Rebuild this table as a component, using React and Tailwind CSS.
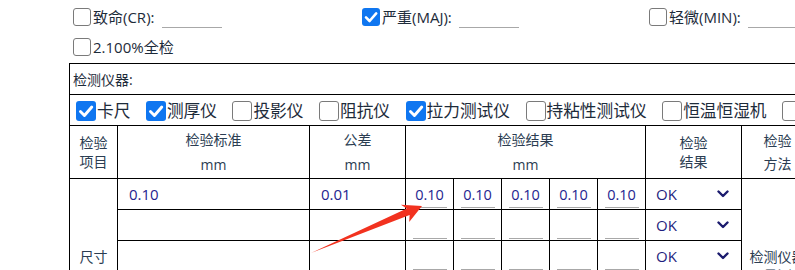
import React from "react";

const levels = [
  { label: "致命(CR):", checked: false, width: "w-[289px]" },
  { label: "严重(MAJ):", checked: true, width: "w-[287px]" },
  { label: "轻微(MIN):", checked: false, width: "w-[200px]" },
];

const instruments = [
  { label: "卡尺", checked: true },
  { label: "测厚仪", checked: true },
  { label: "投影仪", checked: false },
  { label: "阻抗仪", checked: false },
  { label: "拉力测试仪", checked: true },
  { label: "持粘性测试仪", checked: false },
  { label: "恒温恒湿机", checked: false },
  { label: "其他", checked: false },
];

const rows = [
  { standard: "0.10", tolerance: "0.01", values: ["0.10", "0.10", "0.10", "0.10", "0.10"] },
  { standard: "", tolerance: "", values: ["", "", "", "", ""] },
  { standard: "", tolerance: "", values: ["", "", "", "", ""] },
  { standard: "", tolerance: "", values: ["", "", "", "", ""] },
  { standard: "", tolerance: "", values: ["", "", "", "", ""] },
];

function CheckBox({ checked, big }) {
  const size = big ? "w-[20px] h-[20px]" : "w-[18px] h-[18px]";
  if (checked) {
    return (
      <span className={`${size} shrink-0 rounded-[3px] bg-[#0f76f0] flex items-center justify-center`}>
        <svg viewBox="0 0 18 18" className="w-full h-full">
          <path d="M4 9.4 L7.6 13 L14.2 5.4" fill="none" stroke="#fff" strokeWidth="2.6" strokeLinecap="round" strokeLinejoin="round" />
        </svg>
      </span>
    );
  }
  return <span className={`${size} shrink-0 rounded-[3px] border border-[#7a7a7a] bg-white`} />;
}

function Chevron() {
  return (
    <svg width="12" height="8" viewBox="0 0 12 8" className="shrink-0">
      <path d="M1.5 1.5 L6 6 L10.5 1.5" fill="none" stroke="#1b1b6e" strokeWidth="2.4" strokeLinecap="round" strokeLinejoin="round" />
    </svg>
  );
}

export default function App() {
  const cell = "border border-black p-0";
  const head = "border border-black p-0 text-center text-[14px] text-[#2b3d52]";

  return (
    <div className="relative w-[795px] h-[270px] overflow-hidden bg-white font-['Open_Sans','Noto_Sans_CJK_SC',sans-serif]">
      <div className="pl-[69px] pt-[2px]">
        {/* level checkboxes */}
        <div className="pl-[4px] text-[15px] text-[#1d2b3a]">
          <div className="flex h-[30px] items-center">
            {levels.map((lv) => (
              <div key={lv.label} className={`${lv.width} flex items-center shrink-0`}>
                <CheckBox checked={lv.checked} />
                <span className="ml-[2px] whitespace-nowrap">{lv.label}</span>
                <span className="ml-[7px] w-[60px] h-[22px] border-b border-[#a8a8a8]" />
              </div>
            ))}
          </div>
          <div className="flex h-[30px] items-center">
            <CheckBox checked={false} />
            <span className="ml-[2px]">2.100%全检</span>
          </div>
        </div>

        <table className="mt-[1px] border-collapse table-fixed w-[744px]">
          <colgroup>
            <col className="w-[48px]" />
            <col className="w-[192px]" />
            <col className="w-[96px]" />
            <col className="w-[48px]" />
            <col className="w-[48px]" />
            <col className="w-[48px]" />
            <col className="w-[48px]" />
            <col className="w-[48px]" />
            <col className="w-[96px]" />
            <col className="w-[72px]" />
          </colgroup>
          <tbody>
            <tr className="h-[31px]">
              <td colSpan={10} className={`${cell} pl-[3px] text-[14px] text-[#1d2b3a]`}>
                检测仪器:
              </td>
            </tr>
            <tr className="h-[31px]">
              <td colSpan={10} className={cell}>
                <div className="flex items-center pl-[6px] pt-[2px] overflow-hidden whitespace-nowrap text-[16.7px] text-[#1d2b3a]">
                  {instruments.map((it) => (
                    <div key={it.label} className="flex items-center mr-[15.5px] shrink-0">
                      <CheckBox checked={it.checked} big />
                      <span className="ml-[1px] leading-[22px]">{it.label}</span>
                    </div>
                  ))}
                </div>
              </td>
            </tr>
            <tr className="h-[53px]">
              <td className={`${head} leading-[19px]`}>
                检验
                <br />
                项目
              </td>
              <td className={`${head} leading-[25px]`}>
                检验标准
                <br />
                mm
              </td>
              <td className={`${head} leading-[25px]`}>
                公差
                <br />
                mm
              </td>
              <td colSpan={5} className={`${head} leading-[25px]`}>
                检验结果
                <br />
                mm
              </td>
              <td className={`${head} leading-[19px]`}>
                检验
                <br />
                结果
              </td>
              <td className={`${head} leading-[23px]`}>
                检验
                <br />
                方法
              </td>
            </tr>
            {rows.map((r, i) => (
              <tr key={i} className="h-[31px]">
                {i === 0 && (
                  <td rowSpan={rows.length} className={`${head} align-middle`}>
                    尺寸
                  </td>
                )}
                <td className={`${cell} pl-[11px] text-[15px] text-[#24248f]`}>{r.standard}</td>
                <td className={`${cell} pl-[11px] text-[15px] text-[#24248f]`}>{r.tolerance}</td>
                {r.values.map((v, j) => (
                  <td key={j} className={cell}>
                    <div className="flex justify-center pt-[3px]">
                      <span className="w-[34px] h-[24px] border-b border-[#a8a8a8] text-center text-[14.5px] leading-[22px] text-[#24248f]">
                        {v}
                      </span>
                    </div>
                  </td>
                ))}
                <td className={cell}>
                  <div className="flex items-center justify-between pl-[10px] pr-[12px] text-[15px] text-[#1f1f7e]">
                    <span>OK</span>
                    <Chevron />
                  </div>
                </td>
                {i === 0 && (
                  <td rowSpan={rows.length} className={`${head} align-top px-[6px] pt-[68px] leading-[19px]`}>
                    检测仪器量测
                  </td>
                )}
              </tr>
            ))}
          </tbody>
        </table>
      </div>

      {/* red annotation arrow */}
      <svg className="absolute left-0 top-0 pointer-events-none" width="795" height="270">
        <polygon
          points="311,253 406.8,208.6 400.9,204.8 422,206 409.2,222 409.6,215.1"
          fill="#f2321f"
        />
      </svg>
    </div>
  );
}
